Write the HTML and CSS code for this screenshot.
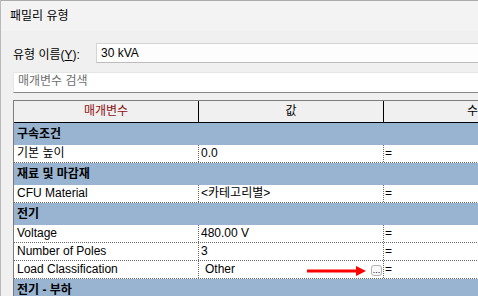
FILE: index.html
```html
<!DOCTYPE html>
<html lang="ko">
<head>
    <meta charset="UTF-8">
    <title>패밀리 유형</title>
    <link rel="stylesheet" href="styles.css">
</head>
<body>
    <div class="window">
        <div class="title-bar">패밀리 유형</div>

        <div class="name-row">
            <label class="name-label">유형 이름(<u>Y</u>):</label>
            <div class="name-input">30 kVA</div>
        </div>

        <div class="search-box">매개변수 검색</div>

        <div class="grid">
            <div class="row head">
                <div class="cell param">매개변수</div>
                <div class="cell">값</div>
                <div class="cell">수식</div>
            </div>

            <div class="row group"><div class="cell">구속조건</div></div>
            <div class="row data">
                <div class="cell">기본 높이</div>
                <div class="cell">0.0</div>
                <div class="cell">=</div>
            </div>

            <div class="row group"><div class="cell">재료 및 마감재</div></div>
            <div class="row data">
                <div class="cell">CFU Material</div>
                <div class="cell">&lt;카테고리별&gt;</div>
                <div class="cell">=</div>
            </div>

            <div class="row group"><div class="cell">전기</div></div>
            <div class="row data">
                <div class="cell">Voltage</div>
                <div class="cell">480.00 V</div>
                <div class="cell">=</div>
            </div>
            <div class="row data">
                <div class="cell">Number of Poles</div>
                <div class="cell">3</div>
                <div class="cell">=</div>
            </div>
            <div class="row data">
                <div class="cell">Load Classification</div>
                <div class="cell picker">
                    <span class="picker-value">Other</span>
                    <svg class="arrow" width="60" height="12" viewBox="0 0 60 12">
                        <rect x="0" y="4.5" width="51" height="3" fill="#f00"/>
                        <polygon points="49,1 59,6 49,11" fill="#f00"/>
                    </svg>
                    <span class="dots-button">...</span>
                </div>
                <div class="cell">=</div>
            </div>

            <div class="row group"><div class="cell">전기 - 부하</div></div>
        </div>
    </div>
</body>
</html>
```

FILE: styles.css
```css
* {
    margin: 0;
    padding: 0;
    box-sizing: border-box;
}

html, body {
    width: 478px;
    height: 296px;
    overflow: hidden;
}

body {
    background: #f0f0f0;
    color: #000;
    font-family: 'Liberation Sans', 'Noto Sans CJK KR', sans-serif;
    font-size: 12px;
}

.window {
    width: 620px;
    height: 296px;
    border-left: 1px solid #b9b9b9;
}

.title-bar {
    height: 31px;
    line-height: 30px;
    padding-left: 9px;
    background: #f3f3f3;
    border-top: 1px solid #ababab;
}

.name-row {
    display: flex;
    align-items: center;
    margin-top: 12px;
    padding-left: 12px;
    height: 20px;
}

.name-label {
    width: 83px;
}

.name-label u {
    text-underline-offset: 1px;
}

.name-input {
    flex: 1;
    height: 20px;
    line-height: 18px;
    padding-left: 4px;
    background: #fdfdfd;
    border: 1px solid #d4d4d4;
    border-bottom-color: #bdbdbd;
}

.search-box {
    margin: 9px 0 0 12px;
    height: 21px;
    line-height: 16px;
    padding-left: 4px;
    color: #6e6e6e;
    background: #fff;
    border: 1px solid #e6e6e6;
    border-bottom-color: #868686;
}

.grid {
    margin: 7px 0 0 12px;
    border: 1px solid #7d7d7d;
    background: #fff;
}

.row {
    display: grid;
    grid-template-columns: 184px 185px 1fr;
}

.head {
    height: 22px;
    line-height: 21px;
    background: #f0f0f0;
    border-bottom: 1px solid #000;
    text-align: center;
}

.head .cell + .cell {
    border-left: 1px solid #000;
}

.head .param {
    color: #8e0f0f;
}

.head .cell:last-child {
    text-align: left;
    padding-left: 83px;
}

.group {
    grid-template-columns: 1fr;
    height: 22px;
    line-height: 22px;
    background: #99b4d1;
    font-weight: bold;
    padding-left: 3px;
}

.data {
    height: 18px;
    line-height: 17px;
    border-bottom: 1px dotted #6a6a6a;
}

.data .cell {
    padding-left: 3px;
}

.data .cell + .cell {
    border-left: 1px dotted #6a6a6a;
    padding-left: 2px;
}

.data .cell:last-child {
    padding-left: 1px;
}

.picker {
    position: relative;
    display: flex;
    align-items: center;
    justify-content: space-between;
    padding-right: 1px;
}

.data .picker-value {
    padding-left: 4px;
}

.arrow {
    position: absolute;
    left: 108px;
    top: 4px;
}

.dots-button {
    width: 11px;
    height: 11px;
    border: 1px solid #b4b4b4;
    border-radius: 3px;
    background: #f9f9f9;
    font-size: 9px;
    line-height: 8px;
    text-align: center;
    color: #000;
    margin-top: 1px;
}
```
